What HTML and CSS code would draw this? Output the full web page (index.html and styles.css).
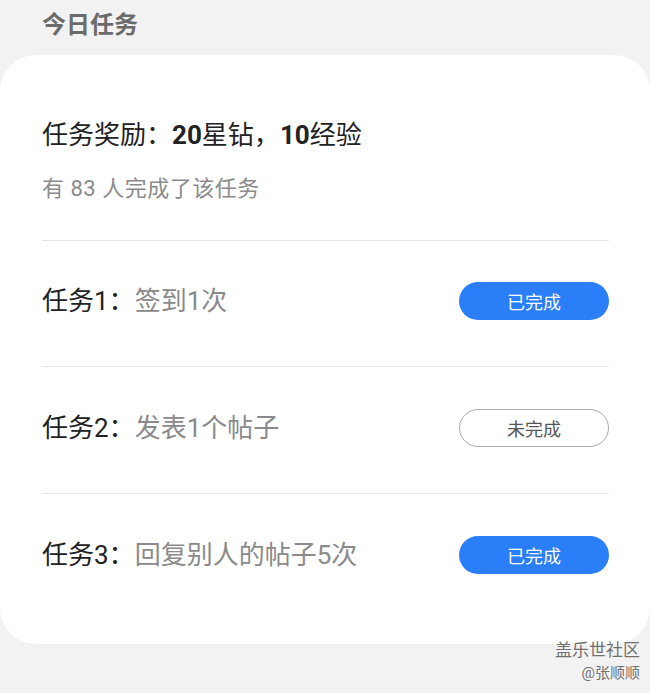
FILE: index.html
```html
<!DOCTYPE html>
<html lang="zh-CN">
<head>
    <meta charset="UTF-8">
    <meta name="viewport" content="width=device-width, initial-scale=1.0">
    <title>今日任务</title>
    <link rel="stylesheet" href="styles.css">
</head>
<body>
<div class="page">
    <h2 class="section-title">今日任务</h2>

    <div class="task-card">
        <div class="reward">
            <div class="reward-title">任务奖励：<b>20</b>星钻，<b>10</b>经验</div>
            <div class="reward-count">有 83 人完成了该任务</div>
        </div>

        <div class="task-row">
            <div class="task-name">任务1：<span class="task-desc">签到1次</span></div>
            <span class="status done">已完成</span>
        </div>

        <div class="task-row">
            <div class="task-name">任务2：<span class="task-desc">发表1个帖子</span></div>
            <span class="status todo">未完成</span>
        </div>

        <div class="task-row">
            <div class="task-name">任务3：<span class="task-desc">回复别人的帖子5次</span></div>
            <span class="status done">已完成</span>
        </div>
    </div>

    <div class="watermark">
        <div class="wm-site">盖乐世社区</div>
        <div class="wm-user">@张顺顺</div>
    </div>
</div>
</body>
</html>
```

FILE: styles.css
```css
html, body {
    margin: 0;
    padding: 0;
    background-color: #f2f2f2;
}

body {
    font-family: Roboto, "Noto Sans CJK SC", sans-serif;
    color: #222;
}

.page {
    position: relative;
    height: 693px;
    overflow: hidden;
}

.section-title {
    margin: 0;
    padding: 8px 0 0 42px;
    height: 47px;
    box-sizing: border-box;
    font-size: 24px;
    line-height: 34px;
    font-weight: bold;
    color: #6b6b6b;
}

.task-card {
    background-color: #fff;
    border-radius: 36px;
    padding: 0 41px 24px 42px;
    margin-top: 8px;
}

.reward {
    padding-top: 63px;
    padding-bottom: 37px;
}

.reward-title {
    font-size: 26px;
    line-height: 34px;
    color: #222;
}

.reward-title b {
    font-weight: bold;
}

.reward-count {
    margin-top: 23px;
    font-size: 22px;
    line-height: 28px;
    letter-spacing: 0.5px;
    color: #8a8a8a;
}

.task-row {
    display: flex;
    align-items: center;
    justify-content: space-between;
    height: 126px;
    box-sizing: border-box;
    padding-bottom: 5px;
    border-top: 1px solid #e6e6e6;
}

.task-row + .task-row {
    height: 127px;
}

.task-name {
    font-size: 26px;
    line-height: 34px;
    color: #222;
}

.task-desc {
    color: #8a8a8a;
}

.status {
    width: 150px;
    height: 38px;
    box-sizing: border-box;
    border-radius: 19px;
    display: flex;
    align-items: center;
    justify-content: center;
    font-size: 18px;
}

.status.done {
    background-color: #2a7ef7;
    color: #fff;
}

.status.todo {
    border: 1px solid #aaa;
    color: #555;
}

.watermark {
    position: absolute;
    right: 10px;
    top: 638px;
    text-align: right;
    color: #6f6f6f;
    text-shadow: 0 0 2px #fff;
}

.wm-site {
    font-size: 17px;
    line-height: 24px;
}

.wm-user {
    font-size: 15px;
    line-height: 22px;
}
```
